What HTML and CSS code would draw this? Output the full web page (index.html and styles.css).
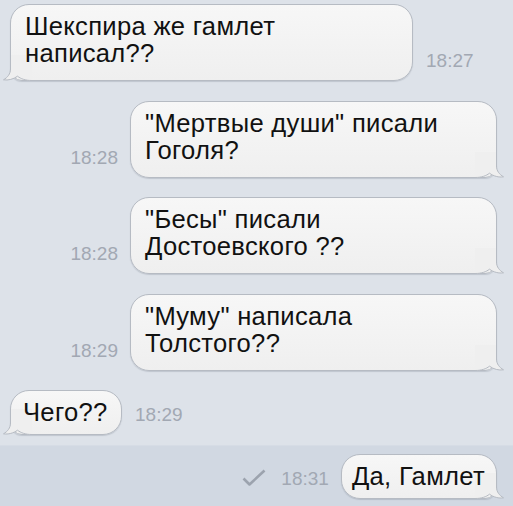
FILE: index.html
```html
<!DOCTYPE html>
<html lang="ru">
<head>
<meta charset="utf-8">
<title>Сообщения</title>
<link rel="stylesheet" href="styles.css">
</head>
<body>
<div class="chat">
  <div class="messages">
    <div class="row in">
      <div class="bubble wide-in">
        <svg class="tail" width="30" height="26" viewBox="0 0 30 26"><path class="tf" d="M8.5 0 L8.5 14 C8.5 19 5.5 22.5 1.5 24.8 C6 25.6 11.5 24.2 15.5 21.2 C19 23.8 23 25.5 30 25.5 L30 0 Z"/><path class="ts" d="M8.5 0 L8.5 14 C8.5 19 5.5 22.5 1.5 24.8 C6 25.6 11.5 24.2 15.5 21.2 C19 23.8 23 25.5 30 25.5"/></svg>
        <span class="text">Шекспира же гамлет<br>написал??</span>
      </div>
      <span class="time">18:27</span>
    </div>
    <div class="row out">
      <span class="time">18:28</span>
      <div class="bubble wide-out">
        <svg class="tail" width="30" height="26" viewBox="0 0 30 26"><path class="tf" d="M8.5 0 L8.5 14 C8.5 19 5.5 22.5 1.5 24.8 C6 25.6 11.5 24.2 15.5 21.2 C19 23.8 23 25.5 30 25.5 L30 0 Z"/><path class="ts" d="M8.5 0 L8.5 14 C8.5 19 5.5 22.5 1.5 24.8 C6 25.6 11.5 24.2 15.5 21.2 C19 23.8 23 25.5 30 25.5"/></svg>
        <span class="text">"Мертвые души" писали<br>Гоголя?</span>
      </div>
    </div>
    <div class="row out">
      <span class="time">18:28</span>
      <div class="bubble wide-out">
        <svg class="tail" width="30" height="26" viewBox="0 0 30 26"><path class="tf" d="M8.5 0 L8.5 14 C8.5 19 5.5 22.5 1.5 24.8 C6 25.6 11.5 24.2 15.5 21.2 C19 23.8 23 25.5 30 25.5 L30 0 Z"/><path class="ts" d="M8.5 0 L8.5 14 C8.5 19 5.5 22.5 1.5 24.8 C6 25.6 11.5 24.2 15.5 21.2 C19 23.8 23 25.5 30 25.5"/></svg>
        <span class="text">"Бесы" писали<br>Достоевского ??</span>
      </div>
    </div>
    <div class="row out">
      <span class="time">18:29</span>
      <div class="bubble wide-out">
        <svg class="tail" width="30" height="26" viewBox="0 0 30 26"><path class="tf" d="M8.5 0 L8.5 14 C8.5 19 5.5 22.5 1.5 24.8 C6 25.6 11.5 24.2 15.5 21.2 C19 23.8 23 25.5 30 25.5 L30 0 Z"/><path class="ts" d="M8.5 0 L8.5 14 C8.5 19 5.5 22.5 1.5 24.8 C6 25.6 11.5 24.2 15.5 21.2 C19 23.8 23 25.5 30 25.5"/></svg>
        <span class="text">"Муму" написала<br>Толстого??</span>
      </div>
    </div>
    <div class="row in">
      <div class="bubble single short-in">
        <svg class="tail" width="30" height="26" viewBox="0 0 30 26"><path class="tf" d="M8.5 0 L8.5 14 C8.5 19 5.5 22.5 1.5 24.8 C6 25.6 11.5 24.2 15.5 21.2 C19 23.8 23 25.5 30 25.5 L30 0 Z"/><path class="ts" d="M8.5 0 L8.5 14 C8.5 19 5.5 22.5 1.5 24.8 C6 25.6 11.5 24.2 15.5 21.2 C19 23.8 23 25.5 30 25.5"/></svg>
        <span class="text">Чего??</span>
      </div>
      <span class="time">18:29</span>
    </div>
  </div>
  <div class="band">
    <div class="row out">
      <svg class="check" width="24" height="18" viewBox="0 0 24 18"><path d="M1.5 9.5 L7.5 15.5 L22.5 1.5"/></svg>
      <span class="time">18:31</span>
      <div class="bubble single short-out">
        <svg class="tail" width="30" height="26" viewBox="0 0 30 26"><path class="tf" d="M8.5 0 L8.5 14 C8.5 19 5.5 22.5 1.5 24.8 C6 25.6 11.5 24.2 15.5 21.2 C19 23.8 23 25.5 30 25.5 L30 0 Z"/><path class="ts" d="M8.5 0 L8.5 14 C8.5 19 5.5 22.5 1.5 24.8 C6 25.6 11.5 24.2 15.5 21.2 C19 23.8 23 25.5 30 25.5"/></svg>
        <span class="text">Да, Гамлет</span>
      </div>
    </div>
  </div>
</div>
</body>
</html>
```

FILE: styles.css
```css
* { box-sizing: border-box; }

html, body {
  margin: 0;
  padding: 0;
}

body {
  width: 513px;
  height: 506px;
  overflow: hidden;
  background: #dde2e9;
  font-family: "Liberation Sans", Arial, sans-serif;
  color: #111;
}

.chat {
  height: 506px;
  display: flex;
  flex-direction: column;
}

.messages {
  display: flex;
  flex-direction: column;
  gap: 19.5px;
  padding-top: 4px;
}

.row {
  display: flex;
  align-items: flex-end;
}

.row.in {
  padding-left: 10px;
}

.row.out {
  justify-content: flex-end;
  padding-right: 16px;
}

.bubble {
  position: relative;
  font-size: 25.6px;
  line-height: 27px;
  letter-spacing: 0.3px;
  padding: 8px 14px 13px 14px;
  background: linear-gradient(#f7f7f7, #efefef);
  border: 1px solid #b6bbc3;
  border-radius: 19px;
  box-shadow: 0 1px 1px rgba(60, 70, 90, 0.18);
  white-space: nowrap;
}

.text {
  position: relative;
  z-index: 1;
}

.bubble.single {
  padding-bottom: 8px;
}

.wide-in {
  width: 403px;
  border-bottom-left-radius: 12px;
}

.wide-out {
  width: 367px;
  border-bottom-right-radius: 12px;
}

.short-in {
  width: 112px;
  padding-left: 12px;
  border-bottom-left-radius: 12px;
}

.short-out {
  padding-left: 10px;
  padding-right: 11px;
  border-bottom-right-radius: 12px;
}

.tail {
  position: absolute;
  bottom: -1px;
  display: block;
}

.row.in .tail {
  left: -9px;
}

.row.out .tail {
  right: -9px;
  transform: scaleX(-1);
}

.tf {
  fill: #efefef;
}

.ts {
  fill: none;
  stroke: #b6bbc3;
  stroke-width: 1;
}

.time {
  font-size: 19px;
  line-height: 19px;
  color: #a2a8b3;
  margin-bottom: 11px;
}

.row.in .time {
  margin-left: 13px;
}

.row.out .time {
  margin-right: 12px;
}

.band {
  flex: 1;
  margin-top: 10px;
  padding-top: 8px;
  background: #d1d8e2;
  border-top: 1px solid #d6dce5;
}

.check {
  display: block;
  margin-right: 15px;
  margin-bottom: 12px;
}

.check path {
  fill: none;
  stroke: #9ca3ae;
  stroke-width: 2.6;
  stroke-linejoin: round;
}
```
